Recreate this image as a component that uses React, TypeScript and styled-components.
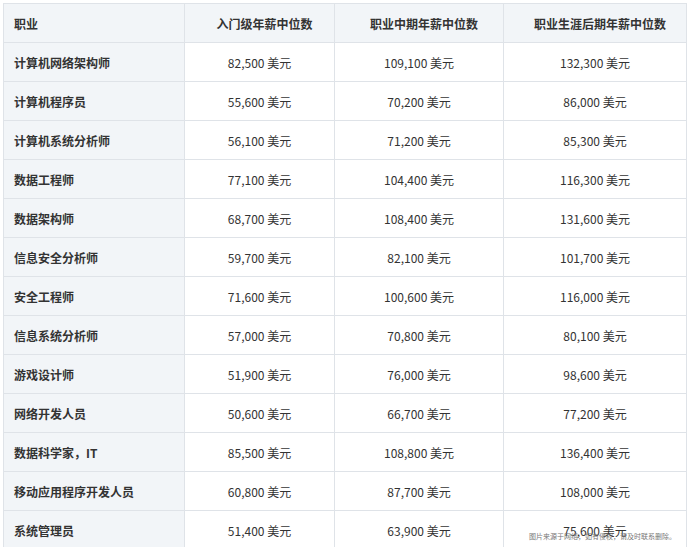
import React from "react";
import styled, { createGlobalStyle } from "styled-components";

const G = createGlobalStyle`
  body { margin: 0; background: #fff; font-family: "Noto Sans CJK SC", "Noto Sans", sans-serif; overflow: hidden; }
`;
const Wrap = styled.div`
  position: relative;
  padding: 3px 2px 0 3px;
  height: 547px;
  box-sizing: border-box;
  overflow: hidden;
`;
const Table = styled.table`
  border-collapse: collapse;
  width: 683px;
  table-layout: fixed;
  font-size: 12px;
  color: #333;
`;
const Th = styled.th<{ $left?: boolean }>`
  height: 38px;
  padding: 0 0 0 10px;
  background: #f2f5f8;
  border: 1px solid #dfe3e8;
  font-weight: 700;
  text-align: ${(p) => (p.$left ? "left" : "center")};
`;
const Td = styled.td<{ $first?: boolean }>`
  height: 38px;
  padding: 0 0 0 ${(p) => (p.$first ? "10px" : "0")};
  border: 1px solid #dfe3e8;
  background: ${(p) => (p.$first ? "#f2f5f8" : "#fff")};
  font-weight: ${(p) => (p.$first ? 700 : 400)};
  text-align: ${(p) => (p.$first ? "left" : "center")};
`;
const Mark = styled.div`
  position: absolute;
  left: 529px;
  top: 531px;
  font-size: 7px;
  color: #777;
  white-space: nowrap;
`;

const rows: [string, string, string, string][] = [
  ["计算机网络架构师", "82,500", "109,100", "132,300"],
  ["计算机程序员", "55,600", "70,200", "86,000"],
  ["计算机系统分析师", "56,100", "71,200", "85,300"],
  ["数据工程师", "77,100", "104,400", "116,300"],
  ["数据架构师", "68,700", "108,400", "131,600"],
  ["信息安全分析师", "59,700", "82,100", "101,700"],
  ["安全工程师", "71,600", "100,600", "116,000"],
  ["信息系统分析师", "57,000", "70,800", "80,100"],
  ["游戏设计师", "51,900", "76,000", "98,600"],
  ["网络开发人员", "50,600", "66,700", "77,200"],
  ["数据科学家，IT", "85,500", "108,800", "136,400"],
  ["移动应用程序开发人员", "60,800", "87,700", "108,000"],
  ["系统管理员", "51,400", "63,900", "75,600"],
];

export default function App() {
  return (
    <Wrap>
      <G />
      <Table>
        <colgroup>
          <col style={{ width: 181 }} />
          <col style={{ width: 150 }} />
          <col style={{ width: 169 }} />
          <col style={{ width: 183 }} />
        </colgroup>
        <thead>
          <tr>
            <Th $left>职业</Th>
            <Th>入门级年薪中位数</Th>
            <Th>职业中期年薪中位数</Th>
            <Th>职业生涯后期年薪中位数</Th>
          </tr>
        </thead>
        <tbody>
          {rows.map((r) => (
            <tr key={r[0]}>
              <Td $first>{r[0]}</Td>
              <Td>{r[1]} 美元</Td>
              <Td>{r[2]} 美元</Td>
              <Td>{r[3]} 美元</Td>
            </tr>
          ))}
        </tbody>
      </Table>
      <Mark>图片来源于网络，如有侵权，请及时联系删除。</Mark>
    </Wrap>
  );
}
